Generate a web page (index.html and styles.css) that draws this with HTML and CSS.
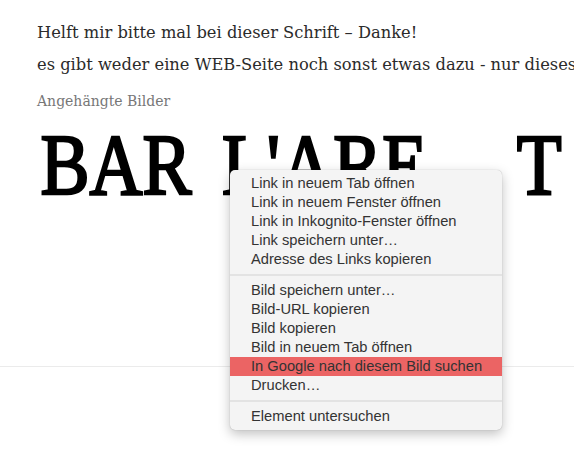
FILE: index.html
```html
<!DOCTYPE html>
<html lang="de">
<head>
    <meta charset="UTF-8">
    <title>Schrift gesucht</title>
    <link rel="stylesheet" href="styles.css">
</head>
<body>
<div id="post">
    <p class="msg">Helft mir bitte mal bei dieser Schrift – Danke!</p>
    <p class="msg">es gibt weder eine WEB-Seite noch sonst etwas dazu - nur dieses Bild</p>
    <h4 class="attach-title">Angehängte Bilder</h4>
    <div class="attach-img">
        <div class="letters">
            <span class="w1">BAR</span>
            <span class="w2">L'ARE</span>
            <span class="w3">T</span>
        </div>
    </div>
</div>
<div class="divider"></div>

<!-- kontextmenue -->
<ul id="menu">
    <li>Link in neuem Tab öffnen</li>
    <li>Link in neuem Fenster öffnen</li>
    <li>Link in Inkognito-Fenster öffnen</li>
    <li>Link speichern unter…</li>
    <li>Adresse des Links kopieren</li>
    <li class="sep"></li>
    <li>Bild speichern unter…</li>
    <li>Bild-URL kopieren</li>
    <li>Bild kopieren</li>
    <li>Bild in neuem Tab öffnen</li>
    <li class="active">In Google nach diesem Bild suchen</li>
    <li>Drucken…</li>
    <li class="sep"></li>
    <li>Element untersuchen</li>
</ul>
</body>
</html>
```

FILE: styles.css
```css
* {
    margin: 0;
    padding: 0;
}

body {
    background: #fff;
    overflow: hidden;
    font-family: "DejaVu Serif", serif;
    color: #2b2b2b;
}

#post {
    padding: 17px 0 0 37px;
    white-space: nowrap;
}

.msg {
    font-size: 16.3px;
    line-height: 32px;
}

.attach-title {
    font-weight: normal;
    font-size: 14px;
    color: #777;
    margin-top: 8px;
    line-height: 24px;
}

.attach-img {
    height: 100px;
    margin-top: 8px;
    overflow: hidden;
}

/* schrift im bild ist schmaler als times, etwas fetter */
.letters {
    display: flex;
    transform: scaleX(0.845);
    transform-origin: left top;
    font-family: "Liberation Serif", "Times New Roman", serif;
    font-size: 87px;
    line-height: 87px;
    color: #000;
    -webkit-text-stroke: 2.6px #000;
}

.w1 {
    margin-left: 4px;
}

.w2 {
    margin-left: 36px;
}

.w3 {
    margin-left: 106px;
}

.divider {
    height: 1px;
    background: #ebebeb;
    margin-top: 145px;
}

#menu {
    position: absolute;
    left: 230px;
    top: 170px;
    width: 272px;
    padding: 4px 0;
    list-style-type: none;
    background: #f4f4f4;
    border-radius: 5px;
    box-shadow: 0 4px 12px rgba(0, 0, 0, 0.25), 0 0 1px rgba(0, 0, 0, 0.3);
    font-family: "Liberation Sans", Arial, sans-serif;
    font-size: 14.7px;
    color: #333;
}

#menu li {
    height: 19px;
    line-height: 19px;
    padding-left: 21px;
}

#menu .sep {
    height: 2px;
    margin: 5px 0;
    background: #e3e3e3;
}

#menu .active {
    background: #eb6464;
}
```
